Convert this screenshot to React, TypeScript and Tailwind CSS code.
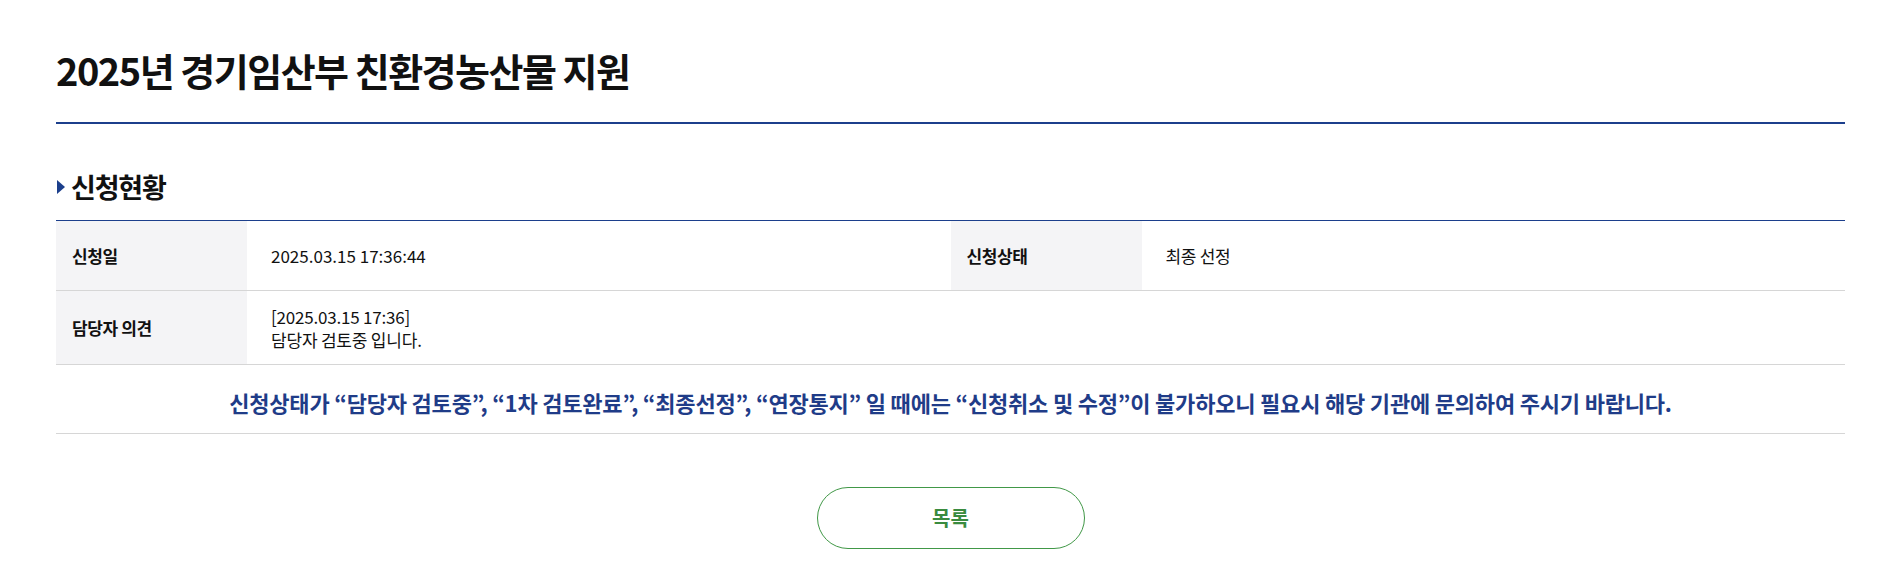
import React from "react";

export default function App() {
  return (
    <div className="min-h-[577px] bg-white pl-[56px] pr-[51px] pt-[50px] font-['Noto_Sans_CJK_KR',sans-serif] text-[#111]">
      <h1 className="border-b-2 border-[#1c3f8c] pb-[32px] text-[38px] font-bold leading-[40px] tracking-[-1.5px] text-[#111]">
        2025년 경기임산부 친환경농산물 지원
      </h1>

      <h2 className="mt-[48px] flex items-center text-[27px] font-bold leading-[30px] tracking-[-1.2px]">
        <svg width="8" height="14" viewBox="0 0 8 14" className="mr-[6px] ml-px shrink-0">
          <path d="M0 0 L8 7 L0 14 Z" fill="#1c3f8c" />
        </svg>
        신청현황
      </h2>

      <div className="mt-[18px] border-t border-[#1c3f8c]">
        <div className="grid grid-cols-[191px_1fr_191px_1fr] border-b border-[#d6d6d6] text-[17px] leading-[23px]">
          <div className="flex h-[69px] items-center bg-[#f4f4f6] pl-4 font-bold tracking-[-0.4px]">신청일</div>
          <div className="flex items-center pl-6 tracking-[0px]">2025.03.15 17:36:44</div>
          <div className="flex items-center bg-[#f4f4f6] pl-4 font-bold tracking-[-0.4px]">신청상태</div>
          <div className="flex items-center pl-6 tracking-[-0.3px]">최종 선정</div>
        </div>
        <div className="grid grid-cols-[191px_1fr] border-b border-[#d6d6d6] text-[17px] leading-[23px]">
          <div className="flex h-[73px] items-center bg-[#f4f4f6] pl-4 font-bold tracking-[-0.4px]">담당자 의견</div>
          <div className="flex flex-col justify-center pl-6 tracking-[-0.2px]">
            <span>[2025.03.15 17:36]</span>
            <span>담당자 검토중 입니다.</span>
          </div>
        </div>
        <div className="flex h-[69px] items-center justify-center border-b border-[#d6d6d6] pt-[6px] text-[22px] font-bold tracking-[-0.2px] text-[#1f3c88]">
          신청상태가 “담당자 검토중”, “1차 검토완료”, “최종선정”, “연장통지” 일 때에는 “신청취소 및 수정”이 불가하오니 필요시 해당 기관에 문의하여 주시기 바랍니다.
        </div>
      </div>

      <div className="mt-[53px] flex justify-center">
        <button className="h-[62px] w-[268px] rounded-full border border-[#419847] bg-white text-[20px] font-bold text-[#3a8b3f]">
          목록
        </button>
      </div>
    </div>
  );
}
